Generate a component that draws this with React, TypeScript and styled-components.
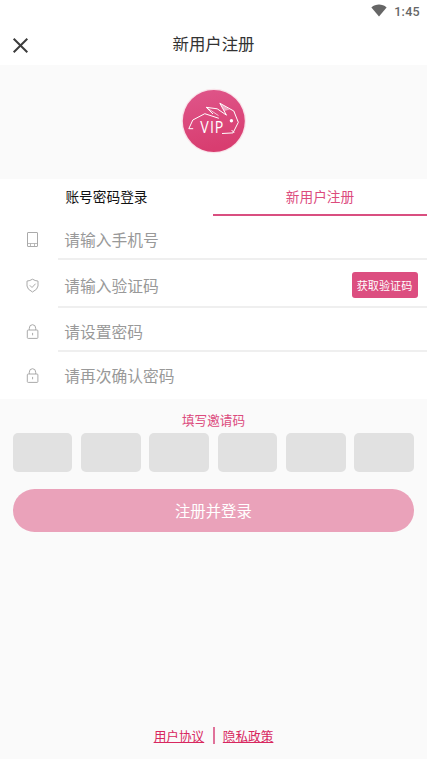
import React from "react";
import styled, { createGlobalStyle } from "styled-components";

const GlobalStyle = createGlobalStyle`
  * { box-sizing: border-box; }
  html, body { margin: 0; padding: 0; background: #fafafa; }
  body, input, button {
    font-family: "Noto Sans CJK SC", sans-serif;
  }
`;

const Screen = styled.div`
  width: 100%;
  height: 759px;
  display: flex;
  flex-direction: column;
  background: #fafafa;
  overflow: hidden;
`;

const StatusBar = styled.div`
  height: 22px;
  flex: none;
  display: flex;
  justify-content: flex-end;
  align-items: flex-start;
  gap: 7px;
  padding: 0 7px 0 0;
  background: #fff;
  color: #666;
  font: 500 12.5px/24px Roboto, sans-serif;
  letter-spacing: 0.3px;
`;

const TitleBar = styled.header`
  height: 43px;
  flex: none;
  display: grid;
  grid-template-columns: 60px 1fr 60px;
  align-items: center;
  background: #fff;
`;

const CloseButton = styled.button`
  border: 0;
  padding: 4px 0 0 12px;
  background: none;
  display: flex;
`;

const Title = styled.h1`
  margin: 0;
  padding-bottom: 1px;
  text-align: center;
  font-size: 16.4px;
  line-height: 42px;
  font-weight: 400;
  color: #333;
`;

const Hero = styled.div`
  height: 114px;
  flex: none;
  display: flex;
  justify-content: center;
  padding-top: 21px;
`;

const Tabs = styled.div`
  height: 37px;
  flex: none;
  display: grid;
  grid-template-columns: 213px 1fr;
  background: #fff;
`;

const Tab = styled.button<{ $active?: boolean }>`
  border: 0;
  border-bottom: 2px solid ${(p) => (p.$active ? "#d94f80" : "transparent")};
  padding: 0;
  background: none;
  font-size: 13.7px;
  line-height: 35px;
  color: ${(p) => (p.$active ? "#dc4b7d" : "#111")};
`;

const Form = styled.div`
  flex: none;
  background: #fff;
`;

const Row = styled.div<{ $height: number }>`
  height: ${(p) => p.$height}px;
  display: flex;
`;

const IconCell = styled.div<{ $last?: boolean }>`
  width: 58px;
  flex: none;
  display: flex;
  align-items: center;
  padding: ${(p) => (p.$last ? "0" : "3px")} 0 0 25px;
`;

const Field = styled.div<{ $last?: boolean }>`
  flex: 1;
  display: flex;
  align-items: center;
  padding: ${(p) => (p.$last ? "0 9.5px 1px 6.3px" : "4px 9.5px 0 6.3px")};
  border-bottom: ${(p) => (p.$last ? "0" : "2px solid #efefef")};
`;

const Input = styled.input`
  flex: 1;
  min-width: 0;
  border: 0;
  padding: 0;
  outline: 0;
  background: none;
  height: 28px;
  font-size: 15.75px;
  color: #333;
  &::placeholder { color: #999; opacity: 1; }
`;

const CodeButton = styled.button`
  width: 66px;
  height: 26px;
  flex: none;
  border: 0;
  border-radius: 3px;
  padding: 0;
  background: #dc4e80;
  color: #fff;
  font-size: 11.1px;
  line-height: 26px;
`;

const InviteLabel = styled.div`
  margin-top: 11px;
  height: 22.5px;
  flex: none;
  text-align: center;
  color: #dc4b7d;
  font-size: 12.6px;
  line-height: 19px;
`;

const InviteBoxes = styled.div`
  flex: none;
  display: grid;
  grid-template-columns: repeat(6, 1fr);
  gap: 8.6px;
  padding: 0 12.8px 0 12.6px;
`;

const InviteBox = styled.div`
  height: 39.5px;
  border-radius: 5px;
  background: #e1e1e1;
`;

const Submit = styled.button`
  flex: none;
  height: 43px;
  margin: 16.5px 12.8px 0 12.6px;
  border: 0;
  border-radius: 22px;
  background: #eaa2ba;
  color: #fff;
  font-size: 15.4px;
  line-height: 43px;
  padding: 0;
`;

const Footer = styled.footer`
  margin-top: auto;
  margin-bottom: 14px;
  display: flex;
  justify-content: center;
  align-items: center;
  gap: 8.3px;
`;

const FooterLink = styled.a`
  color: #d8275f;
  font-size: 12.65px;
  line-height: 19px;
  text-decoration: underline;
`;

const Separator = styled.span`
  width: 2px;
  height: 17px;
  background: #e0729a;
`;

const StatusIcon = styled.svg`
  display: block;
  margin-top: 4px;
`;

const WifiIcon = () => (
  <StatusIcon width="16" height="13" viewBox="0 0 16 13">
    <path d="M.4 3.4C4.8-.4 11.2-.4 15.6 3.4L8 12.6Z" fill="#666" />
  </StatusIcon>
);

const CloseIcon = () => (
  <svg width="17" height="17" viewBox="0 0 17 17">
    <path d="M1.7 1.7 15.3 15.3M15.3 1.7 1.7 15.3" stroke="#3c3c3c" strokeWidth="2" fill="none" />
  </svg>
);

const Logo = () => (
  <svg width="70" height="70" viewBox="0 0 70 70">
    <defs>
      <linearGradient id="disc" x1="0" y1="0" x2="0.2" y2="1">
        <stop offset="0" stopColor="#df568a" />
        <stop offset="1" stopColor="#d83d70" />
      </linearGradient>
    </defs>
    <circle cx="34.8" cy="35" r="32.3" fill="#f7c9d8" opacity="0.5" />
    <circle cx="34.8" cy="35" r="31" fill="url(#disc)" />
    <g fill="none" stroke="#fff" strokeWidth="1" strokeLinejoin="bevel">
      <path d="M14.2 42.7H9.8L13.8 34 25.8 27.7 39.8 32.3" />
      <path d="M34 28 27.2 21.3 38.2 22.8" />
      <path d="M27.2 21.3 39.5 29.6" strokeWidth="0.7" />
      <path d="M38.2 22.8 47.5 29.2 40.8 17.2 54.8 25 59.3 36.3 54 46.9 43 47.5" />
      <path d="M55.2 46.8 52.6 44" />
    </g>
    <path d="m40.8 17.2 10 6.2-5.5 1.6Z" fill="#fff" opacity="0.5" />
    <circle cx="52.4" cy="34.8" r="1.7" fill="#fff" />
    <text
      transform="translate(21.2 47.2) scale(0.86 1)"
      x="0 11.4 17"
      y="0"
      fill="#fff"
      fontFamily="Open Sans, sans-serif"
      fontSize="16.5"
    >
      VIP
    </text>
  </svg>
);

const LineIcon = styled.svg`
  width: 15px;
  height: 18px;
  fill: none;
  stroke: #aaa;
  stroke-width: 1;
`;

const PhoneIcon = () => (
  <LineIcon viewBox="0 0 15 18">
    <rect x="2.5" y="1.5" width="10" height="14" rx="0.4" />
    <path d="M2.5 12.5h10M5.5 12.5v3M9.5 12.5v3" strokeWidth="0.8" />
  </LineIcon>
);

const ShieldIcon = () => (
  <LineIcon viewBox="0 0 15 18">
    <path d="M7.5 2.2Q10 3.8 13 4.1V9Q12.8 12.4 7.5 15 2.2 12.4 2 9V4.1Q5 3.8 7.5 2.2Z" />
    <path d="m4.8 8.3 2.2 2.2 3.6-3.8" />
  </LineIcon>
);

const LockIcon = () => (
  <LineIcon viewBox="0 0 15 18">
    <rect x="2.3" y="7" width="10.6" height="8.4" rx="0.9" />
    <path d="M4.3 7V5.3a3.2 3.6 0 0 1 6.4 0V7M7.6 9.9v2.4" />
  </LineIcon>
);

const rows = [
  { label: "请输入手机号", height: 44, Icon: PhoneIcon },
  { label: "请输入验证码", height: 48, Icon: ShieldIcon, code: true },
  { label: "请设置密码", height: 44, Icon: LockIcon, secret: true },
  { label: "请再次确认密码", height: 47, Icon: LockIcon, secret: true },
];

export default function App() {
  return (
    <>
      <GlobalStyle />
      <Screen>
        <StatusBar>
          <WifiIcon />
          1:45
        </StatusBar>
        <TitleBar>
          <CloseButton aria-label="关闭">
            <CloseIcon />
          </CloseButton>
          <Title>新用户注册</Title>
        </TitleBar>
        <Hero>
          <Logo />
        </Hero>
        <Tabs>
          <Tab>账号密码登录</Tab>
          <Tab $active>新用户注册</Tab>
        </Tabs>
        <Form>
          {rows.map(({ label, height, Icon, code, secret }, i) => {
            const last = i === rows.length - 1;
            return (
              <Row key={label} $height={height}>
                <IconCell $last={last}>
                  <Icon />
                </IconCell>
                <Field $last={last}>
                  <Input type={secret ? "password" : "text"} placeholder={label} />
                  {code && <CodeButton>获取验证码</CodeButton>}
                </Field>
              </Row>
            );
          })}
        </Form>
        <InviteLabel>填写邀请码</InviteLabel>
        <InviteBoxes>
          {Array.from({ length: 6 }, (_, i) => (
            <InviteBox key={i} />
          ))}
        </InviteBoxes>
        <Submit>注册并登录</Submit>
        <Footer>
          <FooterLink>用户协议</FooterLink>
          <Separator />
          <FooterLink>隐私政策</FooterLink>
        </Footer>
      </Screen>
    </>
  );
}
